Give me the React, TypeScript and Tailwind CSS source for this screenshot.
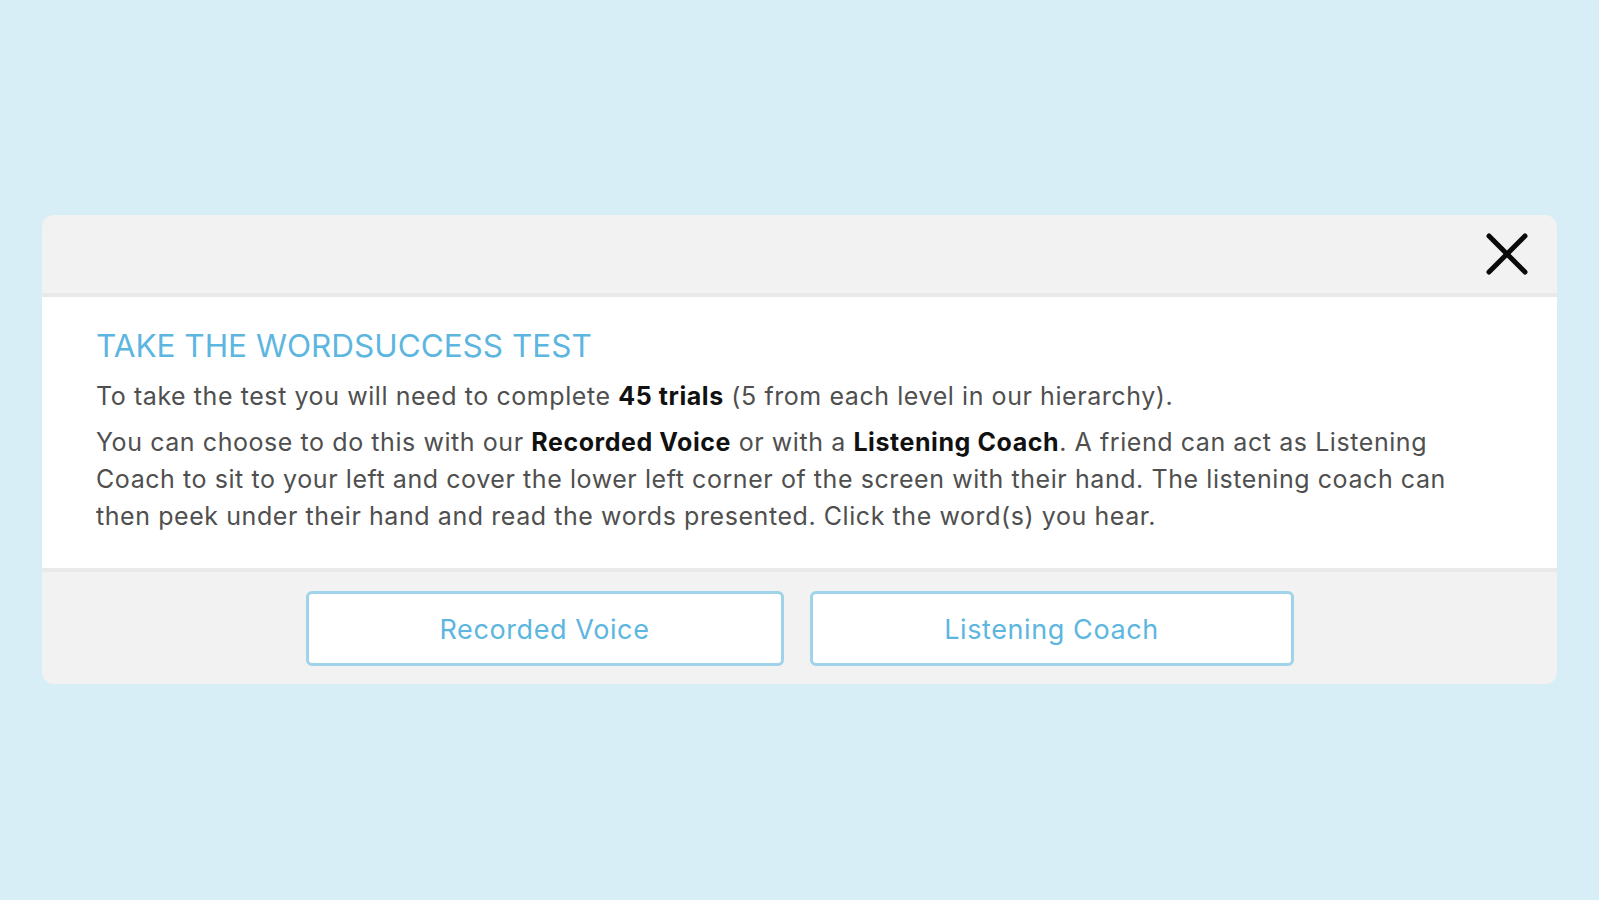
import React from 'react';

const CloseIcon = () => (
  <svg width="44" height="44" viewBox="0 0 44 44" fill="none">
    <path d="M4 4 L40 40 M40 4 L4 40" stroke="#0a0a0a" strokeWidth="5" strokeLinecap="round" />
  </svg>
);

const ChoiceButton = ({ label, width }: { label: string; width: string }) => (
  <button className={`${width} h-[75px] rounded-md border-[3px] border-[#9fd3ea] bg-white pt-[3px] text-[27px] tracking-[0.6px] text-[#5db6df]`}>
    {label}
  </button>
);

export default function App() {
  return (
    <div className="min-h-screen w-full bg-[#d7eef6] pt-[215px] px-[42px] font-['Inter','Liberation_Sans',Arial,sans-serif]">
      <div className="w-[1515px] rounded-[12px] overflow-hidden bg-[#f2f2f2]">
        {/* Header */}
        <div className="h-[82px] flex items-center justify-end pr-[28px] border-b-[4px] border-[#e9e9e9]">
          <CloseIcon />
        </div>

        {/* Body */}
        <div className="bg-white pl-[54px] pr-[60px] pt-[30px] pb-[33px] border-b-[4px] border-[#e9e9e9]">
          <h2 className="text-[31.5px] leading-[37px] text-[#5db6df] mb-[14px]">TAKE THE WORDSUCCESS TEST</h2>
          <div className="text-[25px] leading-[37px] tracking-[0.57px] text-[#4f4f4f]">
            <p className="mb-[9px]">
              To take the test you will need to complete <strong className="text-[#111]">45 trials</strong> (5 from each level in our hierarchy).
            </p>
            <p>
              You can choose to do this with our <strong className="text-[#111]">Recorded Voice</strong> or with a{' '}
              <strong className="text-[#111]">Listening Coach</strong>. A friend can act as Listening Coach to sit to your left and cover the lower left corner of the screen with their hand. The listening coach can then peek under their hand and read the words presented. Click the word(s) you hear.
            </p>
          </div>
        </div>

        {/* Footer */}
        <div className="flex justify-center gap-[26px] pt-[19px] pb-[18px]">
          <ChoiceButton label="Recorded Voice" width="w-[478px]" />
          <ChoiceButton label="Listening Coach" width="w-[484px]" />
        </div>
      </div>
    </div>
  );
}
